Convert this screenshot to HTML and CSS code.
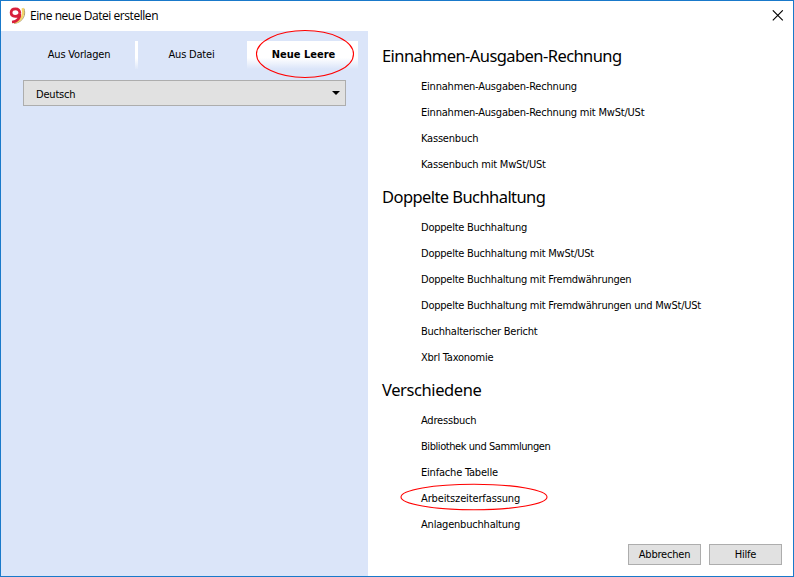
FILE: index.html
```html
<!DOCTYPE html>
<html lang="de">
<head>
<meta charset="utf-8">
<title>Eine neue Datei erstellen</title>
<link rel="stylesheet" href="styles.css">
</head>
<body>
<div class="window">
  <header class="titlebar">
    <svg class="logo" width="17" height="18" viewBox="0 0 17 18" fill="none">
      <path d="M14.9 1.5C17.2 7 14.5 15.4 5 16.5" stroke="#a8946a" stroke-width="1"/>
      <path d="M13.6 1.2C15.6 7 12.5 14.4 5 15.5" stroke="#f3d568" stroke-width="2.2"/>
      <path d="M10.9 6.2C10.7 3.2 9.2 1.8 6.5 1.8C3.7 1.8 2.1 3.4 2.1 5.6C2.1 7.9 3.8 9.3 6.1 9.3C8.6 9.3 10.8 8 10.9 5.6C11.4 10.8 8.6 14.6 3 15" stroke="#d71f3b" stroke-width="2.7"/>
    </svg>
    <span class="title">Eine neue Datei erstellen</span>
    <svg class="close" width="12" height="12" viewBox="0 0 12 12"><path d="M.8.3 10.8 10.3M10.8.3.8 10.3" stroke="#000" stroke-width="1.1"/></svg>
  </header>
  <div class="content">
    <aside class="side">
      <nav class="tabs">
        <div class="tab">Aus Vorlagen</div>
        <div class="tab divided">Aus Datei</div>
        <div class="tab active">Neue Leere
          <svg class="ring ring-tab" width="100" height="50"><ellipse cx="50" cy="25" rx="48.5" ry="23.5"/></svg>
        </div>
      </nav>
      <div class="select"><span>Deutsch</span><i class="arrow"></i></div>
    </aside>
    <main class="main">
      <h2>Einnahmen-Ausgaben-Rechnung</h2>
      <ul>
        <li><span>Einnahmen-Ausgaben-Rechnung</span></li>
        <li><span>Einnahmen-Ausgaben-Rechnung mit MwSt/USt</span></li>
        <li><span>Kassenbuch</span></li>
        <li><span>Kassenbuch mit MwSt/USt</span></li>
      </ul>
      <h2>Doppelte Buchhaltung</h2>
      <ul class="double">
        <li><span>Doppelte Buchhaltung</span></li>
        <li><span>Doppelte Buchhaltung mit MwSt/USt</span></li>
        <li><span>Doppelte Buchhaltung mit Fremdwährungen</span></li>
        <li><span>Doppelte Buchhaltung mit Fremdwährungen und MwSt/USt</span></li>
        <li><span>Buchhalterischer Bericht</span></li>
        <li><span>Xbrl Taxonomie</span></li>
      </ul>
      <h2 class="misc">Verschiedene</h2>
      <ul>
        <li><span>Adressbuch</span></li>
        <li class="tight"><span>Bibliothek und Sammlungen</span></li>
        <li><span>Einfache Tabelle</span></li>
        <li class="marked"><span>Arbeitszeiterfassung</span>
          <svg class="ring ring-item" width="150" height="28"><ellipse cx="75" cy="14" rx="73" ry="12.8"/></svg>
        </li>
        <li><span>Anlagenbuchhaltung</span></li>
      </ul>
      <footer class="actions">
        <button>Abbrechen</button>
        <button>Hilfe</button>
      </footer>
    </main>
  </div>
</div>
</body>
</html>
```

FILE: styles.css
```css
* { box-sizing: border-box; }
body {
  margin: 0;
  font: 11px/14px "DejaVu Sans Condensed", "DejaVu Sans", sans-serif;
  font-stretch: condensed;
  letter-spacing: -0.2px;
  color: #000;
}
.window {
  width: 794px;
  height: 577px;
  border: 1px solid #1979ca;
  background: #fff;
  display: flex;
  flex-direction: column;
  overflow: hidden;
}
.titlebar {
  height: 30px;
  flex: none;
  display: flex;
  align-items: center;
  padding: 0 9px 0 8px;
}
.title {
  font: 12px/16px "Open Sans", "Noto Sans", sans-serif;
  letter-spacing: -0.45px;
  margin-left: 4px;
}
.close { margin-left: auto; }
.content { flex: 1; display: flex; min-height: 0; }
.side { width: 367px; background: #dbe5f9; padding: 10px 10px 0 22px; }
.tabs { display: grid; grid-template-columns: 112px 112px 111px; height: 26px; }
.tab { position: relative; text-align: center; line-height: 28px; }
.divided { padding-right: 2px; border: solid; border-width: 0 0 0 3px; border-image: linear-gradient(#fff 60%, #dbe5f9) 1; }
.active {
  padding-left: 2px;
  font-weight: bold;
  letter-spacing: 0;
  background: linear-gradient(#fff 60%, #dbe5f9);
}
.select {
  width: 323px;
  height: 26px;
  margin-top: 13px;
  border: 1px solid #adadad;
  background: #e1e1e1;
  display: flex;
  align-items: center;
  justify-content: space-between;
  padding: 3px 5px 0 12px;
}
.arrow { border: 4px solid transparent; border-top-color: #000; border-bottom: 0; margin-bottom: 4px; }
.main { flex: 1; padding: 5px 11px 0 14px; }
h2 {
  margin: 0;
  height: 37px;
  padding-top: 9px;
  font: 16.5px/22px "Noto Sans", sans-serif;
  letter-spacing: -0.57px;
}
.misc { letter-spacing: -0.4px; }
ul { list-style: none; margin: 0; padding: 0 0 0 39px; }
li { height: 26px; line-height: 28px; position: relative; white-space: nowrap; }
.double { letter-spacing: -0.24px; }
.marked { letter-spacing: -0.13px; }
.tight { letter-spacing: -0.43px; }
.ring { position: absolute; fill: none; stroke: #f00; stroke-width: 1.1; }
.ring-tab { left: 8px; top: -12px; }
.ring-item { left: -22px; top: -2px; }
.actions { display: flex; justify-content: flex-end; gap: 8px; margin-top: 7px; }
button {
  width: 73px;
  height: 21px;
  padding: 1px 0 0;
  border: 1px solid #adadad;
  background: #e1e1e1;
  font: inherit;
  letter-spacing: inherit;
  color: #000;
}
```
